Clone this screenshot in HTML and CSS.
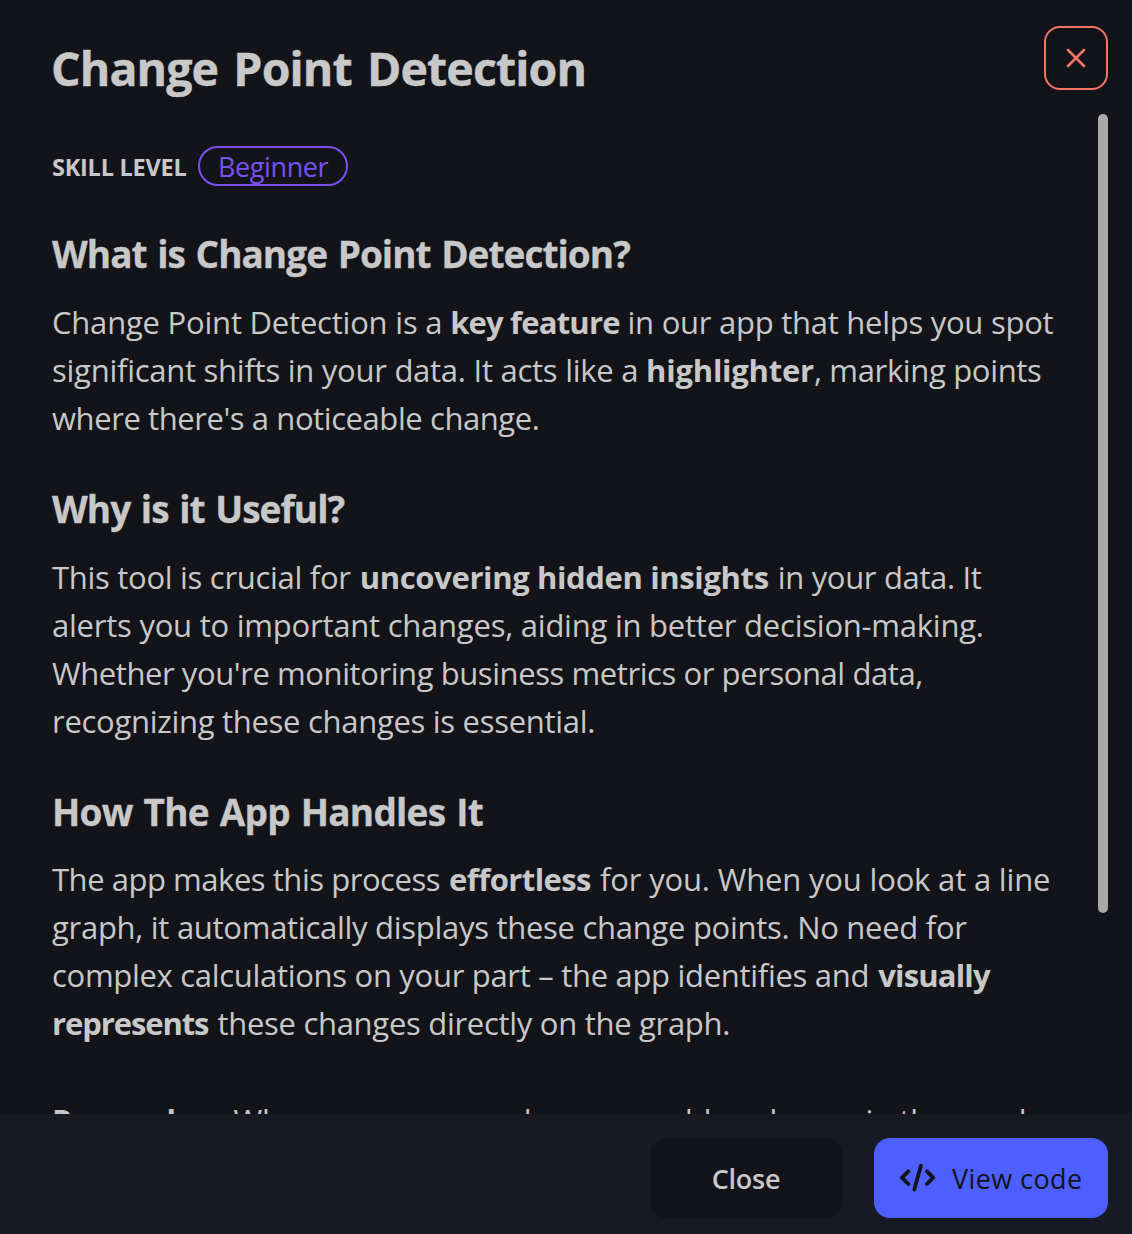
FILE: index.html
```html
<!DOCTYPE html>
<html lang="en">
<head>
<meta charset="utf-8">
<title>Change Point Detection</title>
<link rel="stylesheet" href="styles.css">
</head>
<body>
<div class="dialog">
  <header class="header">
    <h1>Change Point Detection</h1>
    <button class="dismiss" aria-label="Dismiss">
      <svg width="32" height="32" viewBox="0 0 32 32"><path d="M8 8L24 24M24 8L8 24"/></svg>
    </button>
  </header>
  <main class="body">
    <div class="content">
      <div class="skill"><span class="skill-label">SKILL LEVEL</span><span class="pill">Beginner</span></div>
      <h2 class="h-what">What is Change Point Detection?</h2>
      <p>
        <span class="line tight"><span class="s18">Change Point Detection is a</span> <b class="s82">key feature</b> <span class="s26">in our app that helps you spot</span></span>
        <span class="line tight"><span class="s24">significant shifts in your data. It acts like a</span> <b class="s23">highlighter</b><span class="s34">, marking points</span></span>
        <span class="line"><span class="s41">where there's a noticeable change.</span></span>
      </p>
      <h2 class="h-why">Why is it Useful?</h2>
      <p>
        <span class="line"><span class="s29">This tool is crucial for</span> <b class="s38">uncovering hidden insights</b> <span class="s34">in your data. It</span></span>
        <span class="line"><span class="s23">alerts you to important changes, aiding in better decision-making.</span></span>
        <span class="line"><span class="s41">Whether you're monitoring business metrics or personal data,</span></span>
        <span class="line"><span class="s29">recognizing these changes is essential.</span></span>
      </p>
      <h2 class="h-how">How The App Handles It</h2>
      <p class="lift">
        <span class="line"><span class="s46">The app makes this process</span> <b class="s58">effortless</b> <span class="s17">for you. When you look at a line</span></span>
        <span class="line"><span class="s27">graph, it automatically displays these change points. No need for</span></span>
        <span class="line"><span class="s30">complex calculations on your part – the app identifies and</span> <b class="s82">visually</b></span>
        <span class="line"><b class="s120">represents</b> <span class="s29">these changes directly on the graph.</span></span>
      </p>
      <p class="note">
        <span class="line"><b class="s70">Remember:</b> <span class="s26">When you see a marker or a sudden change in the graph</span></span>
      </p>
    </div>
    <div class="track"><div class="thumb"></div></div>
  </main>
  <footer class="footer">
    <button class="btn close">Close</button>
    <button class="btn primary">
      <svg width="36" height="30" viewBox="0 0 36 30"><path d="M8.3 8.3L2 14.6L8.3 21M27 8.3L33.2 14.6L27 21M20.9 2.8L14.3 26.6"/></svg>
      <span>View code</span>
    </button>
  </footer>
</div>
</body>
</html>
```
FILE: styles.css
```css
* { box-sizing: border-box; }
body {
  margin: 0;
  background: #131419;
  color: #c8c8c8;
  font-family: "Open Sans", "Noto Sans", sans-serif;
}
button { font: inherit; color: inherit; padding: 0; }
.dialog { height: 1234px; display: flex; flex-direction: column; overflow: hidden; }
.header {
  height: 114px;
  flex: none;
  display: flex;
  justify-content: space-between;
  padding: 26px 24px 0 51px;
}
h1 { margin: 10px 0 0; font-size: 46.5px; line-height: 64px; letter-spacing: -0.9px; word-spacing: 4px; -webkit-text-stroke: 0.4px; }
.dismiss {
  width: 64px;
  height: 64px;
  display: grid;
  place-items: center;
  background: none;
  border: 2px solid #f47565;
  border-radius: 16px;
}
svg { fill: none; stroke: currentColor; stroke-linecap: round; stroke-linejoin: round; }
.dismiss svg { stroke: #f47565; stroke-width: 2.6; }
.body { height: 1000px; flex: none; display: flex; overflow: hidden; }
.content { flex: 1; padding: 32px 0 0 52px; white-space: nowrap; }
.track { width: 10px; margin-right: 24px; }
.thumb { height: 799px; border-radius: 5px; background: #a9a9a9; }

.skill { display: flex; align-items: center; gap: 12px; height: 40px; }
.skill-label { width: 134px; font-size: 23.5px; font-weight: 700; letter-spacing: -0.24px; line-height: 40px; padding-top: 2px; }
.pill {
  width: 150px;
  height: 40px;
  padding-left: 18px;
  border: 2px solid #7950f2;
  border-radius: 20px;
  color: #7950f2;
  font-size: 27px;
  line-height: 38px;
  letter-spacing: -0.4px;
}
h2 { margin: 43px 0 20px; font-size: 37px; line-height: 48px; word-spacing: 2px; -webkit-text-stroke: 0.3px; }
.h-what { margin-top: 44px; letter-spacing: -0.98px; }
.h-why { letter-spacing: -0.98px; }
.h-how { letter-spacing: -0.75px; }
p { margin: 0; font-size: 31px; line-height: 48px; }
p.lift { margin-top: -1px; }
p.note { margin-top: 49px; }
.line { display: block; word-spacing: 1px; }
.line.tight { word-spacing: -0.2px; }
.line > * { word-spacing: 0; }

/* tracking steps */
.s17 { letter-spacing: -0.17px; }
.s18 { letter-spacing: -0.21px; }
.s23 { letter-spacing: -0.23px; }
.s24 { letter-spacing: -0.26px; }
.s26 { letter-spacing: -0.26px; }
.s27 { letter-spacing: -0.28px; }
.s29 { letter-spacing: -0.29px; }
.s30 { letter-spacing: -0.3px; }
.s34 { letter-spacing: -0.34px; }
.s38 { letter-spacing: -0.37px; }
.s41 { letter-spacing: -0.42px; }
.s46 { letter-spacing: -0.46px; }
.s58 { letter-spacing: -0.58px; }
.s70 { letter-spacing: -0.7px; }
.s82 { letter-spacing: -0.82px; }
.s120 { letter-spacing: -1.1px; }

.footer {
  flex: 1;
  display: flex;
  justify-content: flex-end;
  gap: 32px;
  padding: 24px 24px 16px;
  background: #171a22;
}
.btn { height: 80px; border: 0; border-radius: 16px; font-size: 27px; }
.close { width: 192px; background: #131419; font-weight: 600; letter-spacing: -0.25px; }
.primary {
  width: 234px;
  display: flex;
  align-items: center;
  gap: 16px;
  padding-left: 26px;
  background: #4d5fff;
  color: #131419;
  letter-spacing: 0.41px;
}
.primary svg { stroke-width: 3.8; }
```
